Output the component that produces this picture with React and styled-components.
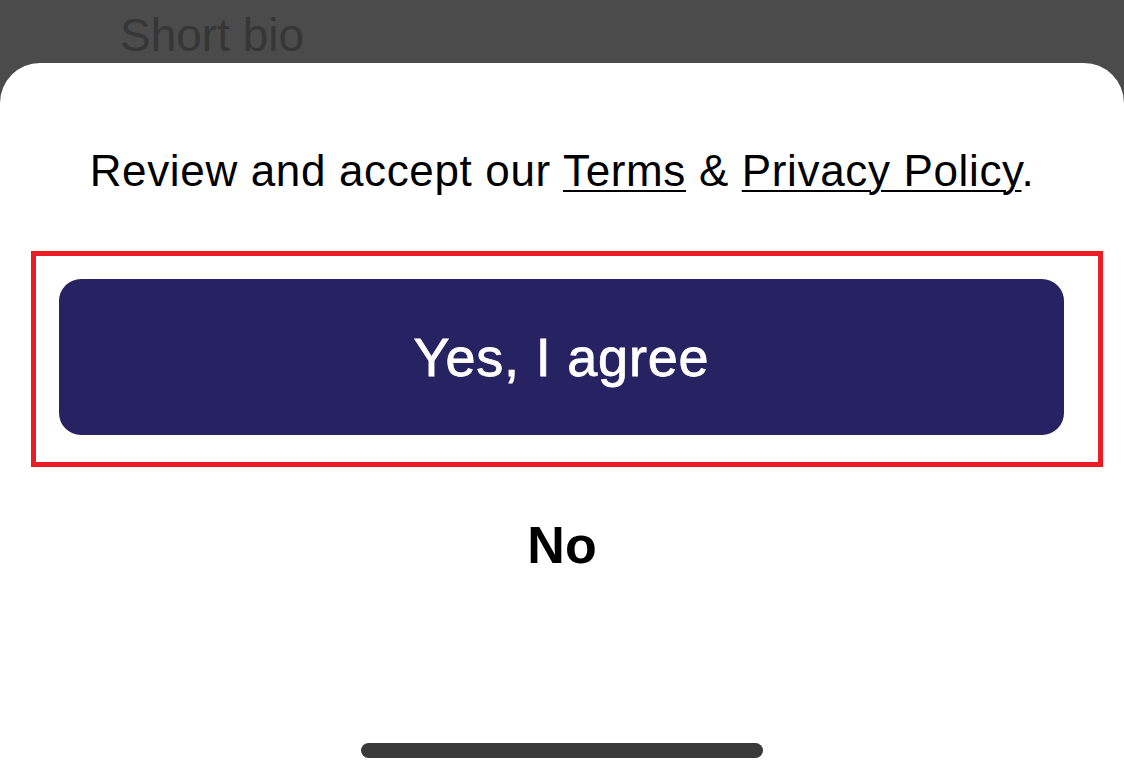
import React from "react";
import styled, { createGlobalStyle } from "styled-components";

const Global = createGlobalStyle`
  html, body { margin: 0; padding: 0; background: #4b4b4b; }
  body { font-family: "Liberation Sans", Arial, sans-serif; -webkit-font-smoothing: antialiased; }
  * { box-sizing: border-box; }
`;

const Screen = styled.div`
  width: 1124px;
  height: 783px;
  display: flex;
  flex-direction: column;
  background: #4b4b4b;
  overflow: hidden;
`;

const Behind = styled.div`
  height: 63px;
  flex: none;
  display: flex;
  align-items: flex-end;
  padding-left: 120px;
  overflow: hidden;
`;

const BehindLabel = styled.span`
  font-size: 46px;
  line-height: 54px;
  color: #363636;
  margin-bottom: 1px;
`;

const Sheet = styled.div`
  flex: 1;
  background: #ffffff;
  border-radius: 40px 40px 0 0;
  display: flex;
  flex-direction: column;
  padding-top: 82px;
  padding-bottom: 25px;
`;

const Consent = styled.p`
  margin: 0;
  text-align: center;
  font-size: 44px;
  line-height: 52px;
  letter-spacing: 0.65px;
  color: #000;
`;

const Link = styled.a`
  color: inherit;
  text-decoration: underline;
  text-decoration-thickness: 2px;
  text-underline-offset: 4px;
`;

const Highlight = styled.div`
  margin: 54px 0 0 31px;
  width: 1072px;
  border: 5px solid #ec1c24;
  padding: 23px 34px 27px 23px;
`;

const PrimaryButton = styled.button`
  width: 100%;
  height: 156px;
  border: none;
  border-radius: 22px;
  background: #272262;
  color: #ffffff;
  font-family: "Liberation Sans", Arial, sans-serif;
  font-size: 54px;
  font-weight: 400;
  letter-spacing: 0.8px;
  -webkit-text-stroke: 0.8px #ffffff;
  cursor: pointer;
`;

const TextButton = styled.button`
  margin-top: 48px;
  align-self: center;
  border: none;
  background: none;
  padding: 0;
  font-family: "Liberation Sans", Arial, sans-serif;
  font-size: 52px;
  line-height: 60px;
  font-weight: 700;
  color: #000;
  cursor: pointer;
`;

const HomeIndicator = styled.div`
  margin-top: auto;
  align-self: center;
  width: 402px;
  height: 15px;
  border-radius: 8px;
  background: #3a3a3a;
`;

export default function App() {
  return (
    <>
      <Global />
      <Screen>
        <Behind>
          <BehindLabel>Short bio</BehindLabel>
        </Behind>
        <Sheet>
          <Consent>
            Review and accept our <Link href="#">Terms</Link> &amp;{" "}
            <Link href="#">Privacy Policy</Link>.
          </Consent>
          <Highlight>
            <PrimaryButton>Yes, I agree</PrimaryButton>
          </Highlight>
          <TextButton>No</TextButton>
          <HomeIndicator />
        </Sheet>
      </Screen>
    </>
  );
}
